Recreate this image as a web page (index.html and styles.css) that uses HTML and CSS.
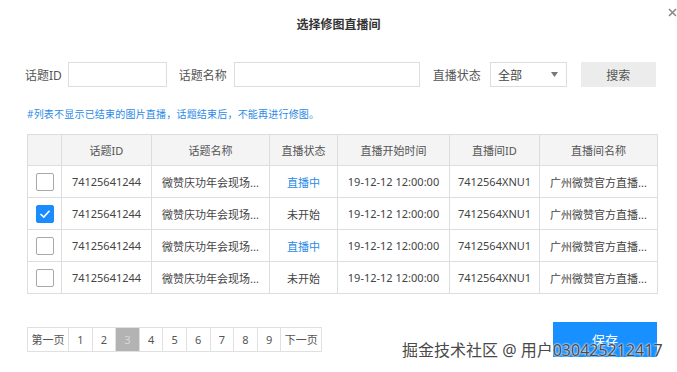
FILE: index.html
```html
<!DOCTYPE html>
<html>

<head>
  <meta charset="utf-8">
  <link rel="stylesheet" href="styles.css">
</head>

<body>
  <div class="dialog">
    <!-- header -->
    <div class="title">选择修图直播间</div>
    <span class="close">
      <svg width="9" height="9" viewBox="0 0 9 9"><path d="M1 1L8 8M8 1L1 8" stroke="#8a8a8a" stroke-width="1.6"/></svg>
    </span>

    <!-- search filters -->
    <div class="filters">
      <span class="label">话题ID</span>
      <input class="field field-id" type="text">
      <span class="label label-name">话题名称</span>
      <input class="field field-name" type="text">
      <span class="label label-status">直播状态</span>
      <div class="select">
        <span>全部</span>
        <svg width="7" height="5" viewBox="0 0 7 5"><path d="M0 0H7L3.5 5Z" fill="#777"/></svg>
      </div>
      <button class="btn-search">搜索</button>
    </div>

    <p class="note">#列表不显示已结束的图片直播，话题结束后，不能再进行修图。</p>

    <!-- list -->
    <table class="list">
      <colgroup>
        <col style="width:34px">
        <col style="width:90px">
        <col style="width:118px">
        <col style="width:68px">
        <col style="width:112px">
        <col style="width:90px">
        <col style="width:118px">
      </colgroup>
      <thead>
        <tr>
          <th></th>
          <th>话题ID</th>
          <th>话题名称</th>
          <th>直播状态</th>
          <th>直播开始时间</th>
          <th>直播间ID</th>
          <th>直播间名称</th>
        </tr>
      </thead>
      <tbody>
        <tr>
          <td><span class="check"></span></td>
          <td>74125641244</td>
          <td>微赞庆功年会现场...</td>
          <td class="live">直播中</td>
          <td>19-12-12 12:00:00</td>
          <td>7412564XNU1</td>
          <td>广州微赞官方直播...</td>
        </tr>
        <tr>
          <td><span class="check checked"><svg width="12" height="10" viewBox="0 0 12 10"><path d="M1.5 5L4.8 8L10.5 1.8" fill="none" stroke="#fff" stroke-width="1.6"/></svg></span></td>
          <td>74125641244</td>
          <td>微赞庆功年会现场...</td>
          <td>未开始</td>
          <td>19-12-12 12:00:00</td>
          <td>7412564XNU1</td>
          <td>广州微赞官方直播...</td>
        </tr>
        <tr>
          <td><span class="check"></span></td>
          <td>74125641244</td>
          <td>微赞庆功年会现场...</td>
          <td class="live">直播中</td>
          <td>19-12-12 12:00:00</td>
          <td>7412564XNU1</td>
          <td>广州微赞官方直播...</td>
        </tr>
        <tr>
          <td><span class="check"></span></td>
          <td>74125641244</td>
          <td>微赞庆功年会现场...</td>
          <td>未开始</td>
          <td>19-12-12 12:00:00</td>
          <td>7412564XNU1</td>
          <td>广州微赞官方直播...</td>
        </tr>
      </tbody>
    </table>

    <!-- footer -->
    <div class="footer">
      <ul class="pager">
        <li class="wide">第一页</li>
        <li>1</li>
        <li>2</li>
        <li class="active">3</li>
        <li>4</li>
        <li>5</li>
        <li>6</li>
        <li>7</li>
        <li>8</li>
        <li>9</li>
        <li class="wide">下一页</li>
      </ul>
      <button class="btn-save">保存</button>
    </div>

    <div class="watermark">掘金技术社区 @ 用户030425212417</div>
  </div>
</body>

</html>
```

FILE: styles.css
```css
body {
  margin: 0;
  background: #fff;
  font-family: "Noto Sans", "Noto Sans CJK SC", sans-serif;
  color: #555;
}

.dialog {
  position: relative;
  width: 677px;
  height: 372px;
  overflow: hidden;
}

/* header */
.title {
  padding-top: 16px;
  line-height: 18px;
  font-size: 12px;
  font-weight: bold;
  color: #333;
  text-align: center;
}

.close {
  position: absolute;
  top: 8px;
  left: 668px;
  line-height: 0;
}

/* filters */
.filters {
  display: flex;
  align-items: center;
  margin-top: 28px;
  padding-left: 25px;
  height: 25px;
}

.label {
  font-size: 12px;
  color: #555;
  white-space: nowrap;
}

.field {
  box-sizing: border-box;
  height: 25px;
  border: 1px solid #ddd;
  padding: 0 6px;
  outline: none;
}

.field-id {
  width: 99px;
  margin-left: 6px;
}

.label-name {
  margin-left: 12px;
}

.field-name {
  width: 186px;
  margin-left: 7px;
}

.label-status {
  margin-left: 13px;
}

.select {
  box-sizing: border-box;
  display: flex;
  align-items: center;
  justify-content: space-between;
  width: 77px;
  height: 25px;
  margin-left: 9px;
  padding: 0 8px 0 7px;
  border: 1px solid #ddd;
  font-size: 12px;
  color: #444;
}

.btn-search {
  width: 75px;
  height: 25px;
  margin-left: 14px;
  border: none;
  background: #ececec;
  font-family: inherit;
  font-size: 12px;
  color: #555;
}

.note {
  margin: 20px 0 0 27px;
  font-size: 10px;
  line-height: 14px;
  letter-spacing: 0.2px;
  color: #2b8ae6;
}

/* table */
.list {
  margin: 13px 0 0 27px;
  width: 630px;
  table-layout: fixed;
  border-collapse: collapse;
  font-size: 11px;
}

.list th,
.list td {
  height: 31px;
  padding: 0;
  border: 1px solid #ddd;
  text-align: center;
  white-space: nowrap;
  overflow: hidden;
}

.list th {
  height: 30px;
  background: #f4f4f4;
  font-weight: normal;
  color: #555;
}

.list td {
  color: #444;
}

.list td.live {
  color: #2b8ae6;
}

.check {
  box-sizing: border-box;
  display: inline-flex;
  align-items: center;
  justify-content: center;
  width: 18px;
  height: 18px;
  border: 1px solid #a8a8a8;
  border-radius: 2px;
  vertical-align: middle;
}

.check.checked {
  background: #1a8cff;
  border-color: #1a8cff;
}

/* footer */
.footer {
  display: flex;
  justify-content: space-between;
  align-items: flex-start;
  margin: 28px 20px 0 27px;
}

.pager {
  display: flex;
  list-style-type: none;
  margin: 5px 0 0;
  padding: 0;
  border: 1px solid #e0e0e0;
  height: 23px;
}

.pager li {
  width: 22.6px;
  line-height: 23px;
  text-align: center;
  font-size: 11px;
  color: #555;
  border-left: 1px solid #e0e0e0;
}

.pager li:first-child {
  border-left: none;
}

.pager li.wide {
  width: 40px;
}

.pager li.active {
  background: #b3b3b3;
  color: #d8d8d8;
}

.btn-save {
  width: 104px;
  height: 35px;
  border: none;
  background: #1890ff;
  color: #fff;
  font-family: inherit;
  font-size: 13px;
}

.watermark {
  position: absolute;
  left: 402px;
  top: 340px;
  font-size: 16px;
  line-height: 20px;
  color: #4a4a4a;
  text-shadow: 0 0 2px #fff, 0 0 2px #fff;
  white-space: nowrap;
}
```
